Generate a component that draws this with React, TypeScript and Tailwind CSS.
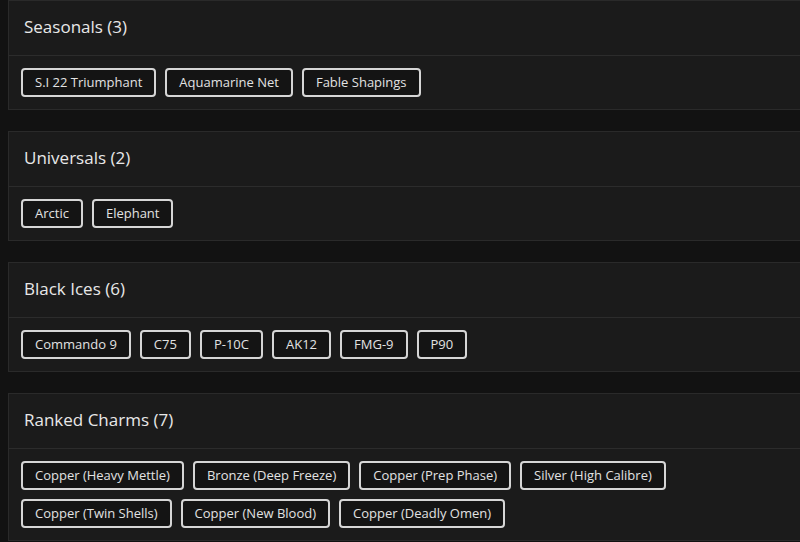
const sections = [
  { title: 'Seasonals', items: ['S.I 22 Triumphant', 'Aquamarine Net', 'Fable Shapings'] },
  { title: 'Universals', items: ['Arctic', 'Elephant'] },
  { title: 'Black Ices', items: ['Commando 9', 'C75', 'P-10C', 'AK12', 'FMG-9', 'P90'] },
  {
    title: 'Ranked Charms',
    items: [
      'Copper (Heavy Mettle)',
      'Bronze (Deep Freeze)',
      'Copper (Prep Phase)',
      'Silver (High Calibre)',
      'Copper (Twin Shells)',
      'Copper (New Blood)',
      'Copper (Deadly Omen)',
    ],
  },
]

function Section({ title, items }: { title: string; items: string[] }) {
  return (
    <section className="bg-[#1b1b1b] border border-[#2a2a2a] mr-[-8px]">
      {/* Header */}
      <div className="h-[55px] px-[15px] pb-[2px] flex items-center border-b border-[#2c2c2c]">
        <h2 className="text-[17px] font-medium text-[#e8e8e8]">
          {title} ({items.length})
        </h2>
      </div>

      {/* Chips */}
      <div className="px-3 py-3 flex flex-wrap gap-x-[9px] gap-y-[9px]">
        {items.map(item => (
          <span
            key={item}
            className="border-2 border-[#d6d6d6] rounded-[4px] bg-[#141414] px-3 py-[5px] text-[13px] leading-[15px] text-[#e2e2e2]"
          >
            {item}
          </span>
        ))}
      </div>
    </section>
  )
}

export default function App() {
  return (
    <div
      className="min-h-[542px] bg-[#121212] pl-2 flex flex-col gap-[21px] overflow-hidden"
      style={{ fontFamily: '"Open Sans", "DejaVu Sans", sans-serif' }}
    >
      {sections.map(s => (
        <Section key={s.title} title={s.title} items={s.items} />
      ))}
    </div>
  )
}
